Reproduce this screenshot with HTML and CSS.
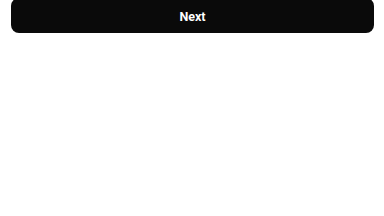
FILE: index.html
```html
<!DOCTYPE html>
<html>
<head>
<meta charset="utf-8">
<link rel="stylesheet" href="styles.css">
</head>
<body>
<div class="page">
  <button class="next-btn">Next</button>
</div>
</body>
</html>
```
FILE: styles.css
```css
html, body {
  margin: 0;
  padding: 0;
  background: #ffffff;
  width: 384px;
  height: 216px;
  overflow: hidden;
}
.page {
  display: flex;
  flex-direction: column;
  padding: 0 10px 0 11px;
}
.next-btn {
  margin-top: -2px;
  height: 35px;
  width: 100%;
  border: none;
  border-radius: 8px;
  background: #0a0a0a;
  color: #ffffff;
  font-family: Roboto, "Liberation Sans", sans-serif;
  font-weight: 700;
  font-size: 12.5px;
  display: flex;
  align-items: center;
  justify-content: center;
  padding: 1px 0 0 0;
}
```
